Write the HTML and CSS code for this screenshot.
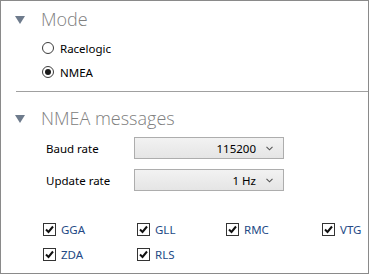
FILE: index.html
```html
<!DOCTYPE html>
<html>
<head>
<meta charset="utf-8">
<link rel="stylesheet" href="styles.css">
</head>
<body>
<div class="panel">
  <div class="section-head">
    <svg class="tri" width="10" height="8" viewBox="0 0 10 8"><polygon points="0,0 10,0 5,8" fill="#6e7b8c"/></svg>
    <span class="title">Mode</span>
  </div>
  <div class="radios">
    <label class="radio"><span class="circle"></span><span>Racelogic</span></label>
    <label class="radio"><span class="circle on"><span class="dot"></span></span><span>NMEA</span></label>
  </div>
  <div class="sep"></div>
  <div class="section-head second">
    <svg class="tri" width="10" height="8" viewBox="0 0 10 8"><polygon points="0,0 10,0 5,8" fill="#6e7b8c"/></svg>
    <span class="title">NMEA messages</span>
  </div>
  <div class="field">
    <span class="flabel">Baud rate</span>
    <div class="select"><span>115200</span><svg class="chev" width="7" height="5" viewBox="0 0 7 5"><polyline points="0.5,0.8 3.5,3.8 6.5,0.8" fill="none" stroke="#555" stroke-width="1.1"/></svg></div>
  </div>
  <div class="field second-field">
    <span class="flabel">Update rate</span>
    <div class="select"><span>1 Hz</span><svg class="chev" width="7" height="5" viewBox="0 0 7 5"><polyline points="0.5,0.8 3.5,3.8 6.5,0.8" fill="none" stroke="#555" stroke-width="1.1"/></svg></div>
  </div>
  <div class="checks">
    <label class="check"><span class="box"><svg width="11" height="11" viewBox="0 0 11 11"><polyline points="2,5.5 4.5,8 9,2.5" fill="none" stroke="#111" stroke-width="2"/></svg></span><span>GGA</span></label>
    <label class="check"><span class="box"><svg width="11" height="11" viewBox="0 0 11 11"><polyline points="2,5.5 4.5,8 9,2.5" fill="none" stroke="#111" stroke-width="2"/></svg></span><span>GLL</span></label>
    <label class="check"><span class="box"><svg width="11" height="11" viewBox="0 0 11 11"><polyline points="2,5.5 4.5,8 9,2.5" fill="none" stroke="#111" stroke-width="2"/></svg></span><span>RMC</span></label>
    <label class="check"><span class="box"><svg width="11" height="11" viewBox="0 0 11 11"><polyline points="2,5.5 4.5,8 9,2.5" fill="none" stroke="#111" stroke-width="2"/></svg></span><span>VTG</span></label>
    <label class="check"><span class="box"><svg width="11" height="11" viewBox="0 0 11 11"><polyline points="2,5.5 4.5,8 9,2.5" fill="none" stroke="#111" stroke-width="2"/></svg></span><span>ZDA</span></label>
    <label class="check"><span class="box"><svg width="11" height="11" viewBox="0 0 11 11"><polyline points="2,5.5 4.5,8 9,2.5" fill="none" stroke="#111" stroke-width="2"/></svg></span><span>RLS</span></label>
  </div>
</div>
</body>
</html>
```
FILE: styles.css
```css
html, body {
  margin: 0;
  padding: 0;
  background: #ffffff;
}
body {
  font-family: "Noto Sans", "Open Sans", sans-serif;
  font-size: 11.5px;
  color: #000;
}
.panel {
  box-sizing: border-box;
  width: 369px;
  height: 274px;
  border: 1px solid #8a8a8a;
  padding-top: 5px;
}
.section-head {
  display: flex;
  align-items: center;
  height: 26px;
  padding-left: 14px;
}
.section-head.second {
  margin-top: 13px;
}
.tri {
  display: block;
  margin-top: 1px;
}
.title {
  margin-left: 16px;
  font-family: "Open Sans", sans-serif;
  font-weight: 300;
  font-size: 18px;
  line-height: 26px;
  color: #808080;
}
.radios {
  margin-top: 4px;
  padding-left: 41px;
  display: flex;
  flex-direction: column;
}
.radio {
  display: flex;
  align-items: center;
  height: 24px;
}
.circle {
  box-sizing: border-box;
  width: 12px;
  height: 12px;
  border: 1px solid #3c3c3c;
  border-radius: 50%;
  margin-right: 6px;
  display: flex;
  align-items: center;
  justify-content: center;
  background: #fff;
}
.dot {
  width: 6px;
  height: 6px;
  border-radius: 50%;
  background: #1a1a1a;
}
.sep {
  margin-top: 7px;
  margin-left: 15px;
  height: 1px;
  background: #a0a0a0;
}
.field {
  display: flex;
  align-items: center;
  margin-top: 6px;
  padding-left: 45px;
}
.field.second-field {
  margin-top: 10px;
}
.flabel {
  width: 88px;
}
.select {
  box-sizing: border-box;
  width: 150px;
  height: 22px;
  border: 1px solid #adadad;
  background: linear-gradient(#f2f2f2, #e5e5e5);
  display: flex;
  align-items: center;
  justify-content: flex-end;
  padding-right: 10px;
}
.chev {
  margin-left: 10px;
  display: block;
}
.checks {
  margin-top: 26px;
  padding-left: 42px;
  display: grid;
  grid-template-columns: 94px 89px 96px auto;
  grid-auto-rows: 25px;
}
.check {
  display: flex;
  align-items: center;
  color: #244a86;
}
.box {
  box-sizing: border-box;
  width: 13px;
  height: 13px;
  border: 1px solid #333;
  margin-right: 5px;
  display: flex;
  align-items: center;
  justify-content: center;
  background: #fff;
}
.box svg {
  display: block;
}
```
